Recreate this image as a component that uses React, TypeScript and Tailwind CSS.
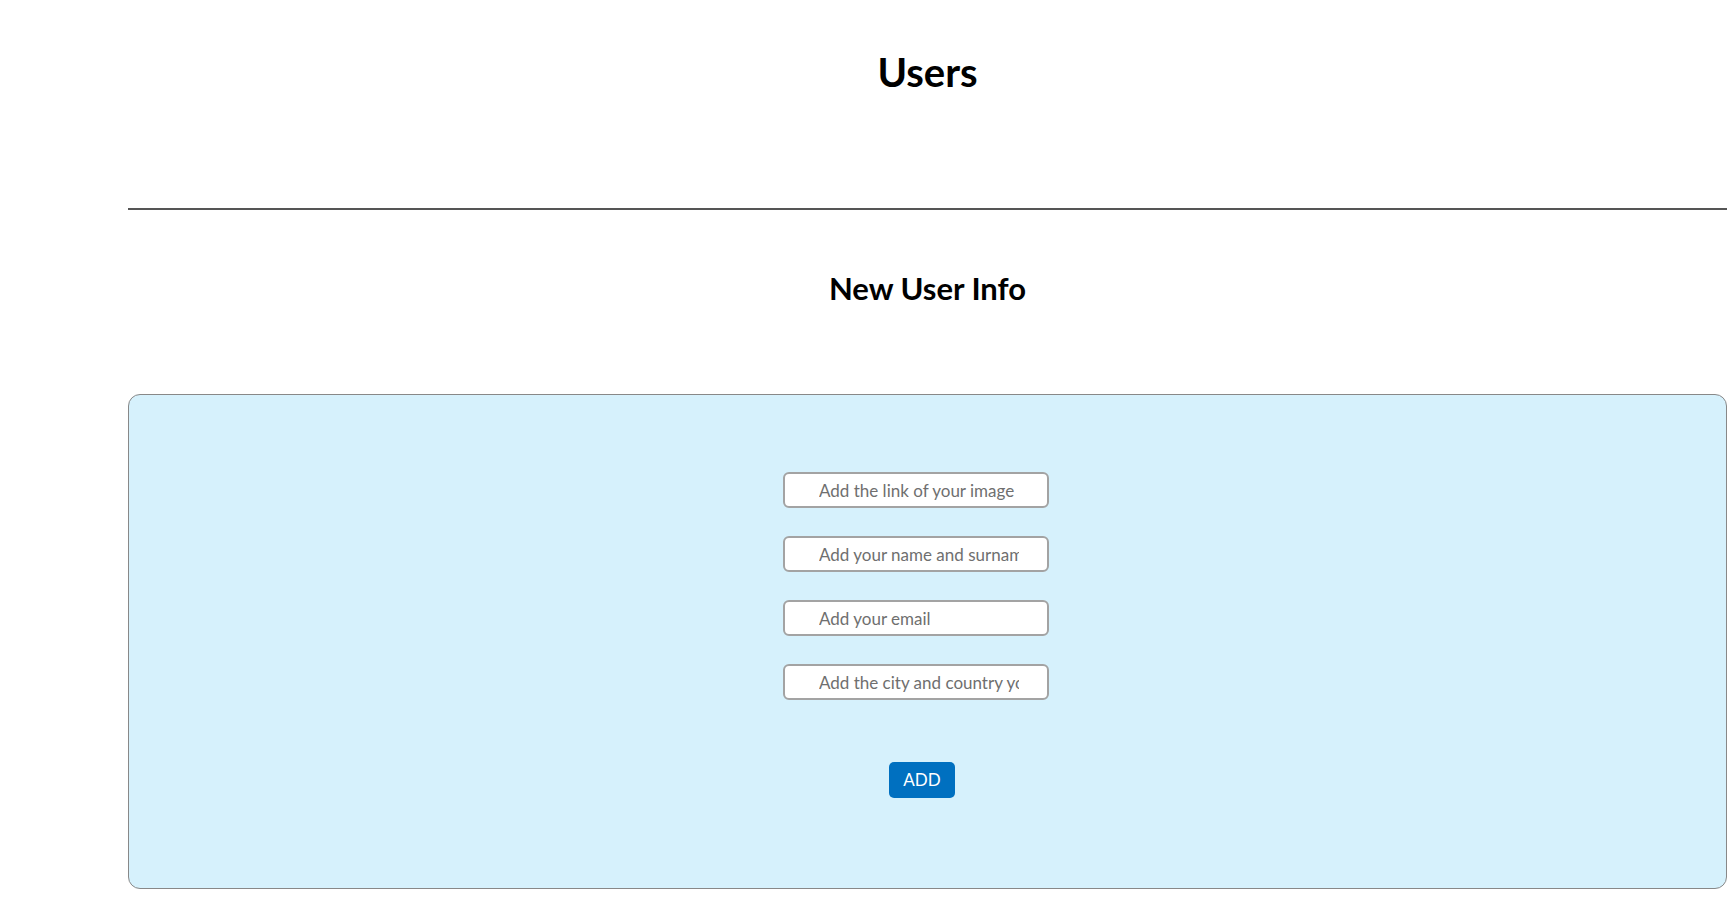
export default function App() {
  const fields = [
    "Add the link of your image",
    "Add your name and surname",
    "Add your email",
    "Add the city and country you live in",
  ];

  return (
    <div className="min-h-screen w-full overflow-hidden bg-white font-['Lato','Noto_Sans',sans-serif] text-black">
      <div className="ml-[128px]">
        <h1 className="pt-[48px] text-center text-[40px] font-bold leading-[48px]">
          Users
        </h1>
        <hr className="mt-[112px] border-0 border-t-2 border-[#555555]" />
        <h2 className="mt-[60px] text-center text-[31px] font-bold leading-[36px]">
          New User Info
        </h2>

        {/* form panel */}
        <div className="mt-[88px] flex h-[495px] flex-col items-center rounded-xl border border-[#888888] bg-[#d6f1fc] pt-[77px]">
          <div className="mr-[23px] flex flex-col gap-[28px]">
            {fields.map((f) => (
              <input
                key={f}
                type="text"
                placeholder={f}
                className="h-[36px] w-[266px] rounded-[6px] border-2 border-[#a3a3a3] bg-white pl-[34px] pr-[28px] text-[17px] text-[#555] outline-none placeholder:text-[#6f6f6f]"
              />
            ))}
          </div>
          <button className="mr-[11px] mt-[62px] h-[36px] w-[66px] rounded-[5px] bg-[#0070c0] text-[17px] text-white">
            ADD
          </button>
        </div>
      </div>
    </div>
  );
}
